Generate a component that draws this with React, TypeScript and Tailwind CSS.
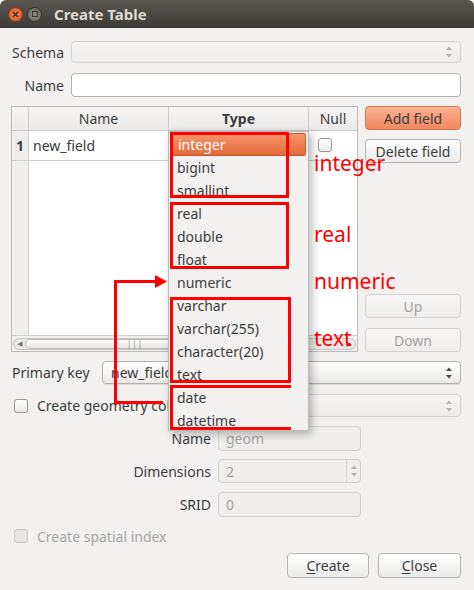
import type { ReactNode } from 'react'
import clsx from 'clsx'

const TYPES = [
  'integer',
  'bigint',
  'smallint',
  'real',
  'double',
  'float',
  'numeric',
  'varchar',
  'varchar(255)',
  'character(20)',
  'text',
  'date',
  'datetime',
]

function SpinArrows({ disabled }: { disabled?: boolean }) {
  const c = disabled ? '#b4b2af' : '#4a4a4a'
  return (
    <svg width="8" height="14" viewBox="0 0 8 14">
      <path d="M1 5 L4 1.5 L7 5 Z" fill={c} />
      <path d="M1 9 L4 12.5 L7 9 Z" fill={c} />
    </svg>
  )
}

function Combo({
  disabled,
  className,
  children,
}: {
  disabled?: boolean
  className?: string
  children?: ReactNode
}) {
  return (
    <div
      className={clsx(
        'flex items-center justify-between rounded-[4px] border pl-[8px] pr-[7px]',
        disabled
          ? 'border-[#d4d3d1] bg-linear-to-b from-[#f6f5f4] to-[#edeceb]'
          : 'border-[#b3b1ae] bg-linear-to-b from-white to-[#ebeae9] shadow-[0_1px_0_rgba(0,0,0,0.08)]',
        className,
      )}
    >
      <span className="truncate">{children}</span>
      <SpinArrows disabled={disabled} />
    </div>
  )
}

function Check({ disabled }: { disabled?: boolean }) {
  return (
    <div
      className={clsx(
        'h-[14px] w-[14px] shrink-0 rounded-[3px] border',
        disabled
          ? 'border-[#c9c8c6] bg-[#e8e7e6]'
          : 'border-[#99968f] bg-linear-to-b from-white to-[#ebeae9]',
      )}
    />
  )
}

function Button({
  className,
  disabled,
  primary,
  children,
}: {
  className?: string
  disabled?: boolean
  primary?: boolean
  children: ReactNode
}) {
  return (
    <div
      className={clsx(
        'flex items-center justify-center rounded-[4px] border',
        primary
          ? 'border-[#d0754f] bg-linear-to-b from-[#fcb092] to-[#f0895f] text-[#3c3c3c]'
          : disabled
            ? 'border-[#d3d2d0] bg-linear-to-b from-[#f7f6f5] to-[#eeedec] text-[#a3a3a3]'
            : 'border-[#b5b3b0] bg-linear-to-b from-white to-[#ecebea] text-[#3c3c3c]',
        className,
      )}
    >
      {children}
    </div>
  )
}

function DisabledInput({ className, children }: { className?: string; children?: ReactNode }) {
  return (
    <div
      className={clsx(
        'flex items-center rounded-[4px] border border-[#d2d1cf] bg-[#efeeed] pl-[7px] text-[#a3a3a3]',
        className,
      )}
    >
      {children}
    </div>
  )
}

function TitleBar() {
  return (
    <div className="flex h-[28px] items-center rounded-t-[6px] bg-linear-to-b from-[#5a5751] to-[#3c3b37] pl-[8px]">
      <div className="flex h-[15px] w-[15px] items-center justify-center rounded-full border border-[#8e3a17] bg-radial from-[#f58a5c] to-[#df4b1a]">
        <svg width="7" height="7" viewBox="0 0 7 7">
          <path d="M1 1 L6 6 M6 1 L1 6" stroke="#3b2219" strokeWidth="1.4" />
        </svg>
      </div>
      <div className="ml-[4px] flex h-[15px] w-[15px] items-center justify-center rounded-full border border-[#34322f] bg-radial from-[#8b8881] to-[#6a6760]">
        <div className="h-[6px] w-[6px] border border-[#3b3a36]" />
      </div>
      <span className="ml-[12px] text-[15px] font-bold text-[#dfdbd2]">Create Table</span>
    </div>
  )
}

function FieldsTable() {
  return (
    <div className="flex h-full w-[347px] flex-col border border-[#bdbbb8] bg-white">
      <div className="flex h-[24px] border-b border-[#c9c8c6] bg-linear-to-b from-[#f6f5f4] to-[#ebeae9]">
        <div className="w-[17px] border-r border-[#cfcecc]" />
        <div className="flex w-[140px] items-center justify-center border-r border-[#cfcecc]">Name</div>
        <div className="flex w-[140px] items-center justify-center border-r border-[#cfcecc] font-bold">
          Type
        </div>
        <div className="flex flex-1 items-center justify-center">Null</div>
      </div>
      <div className="flex flex-1">
        <div className="flex w-[17px] flex-col border-r border-[#cfcecc] bg-[#efeeed]">
          <div className="flex h-[30px] items-center justify-center border-b border-[#cfcecc] font-bold">
            1
          </div>
        </div>
        <div className="w-[140px] border-r border-[#e6e5e4]">
          <div className="flex h-[30px] items-center border-b border-[#cfcecc] pl-[4px]">new_field</div>
        </div>
        <div className="w-[140px] border-r border-[#e6e5e4]">
          <div className="h-[30px] border-b border-[#cfcecc]" />
        </div>
        <div className="flex-1">
          <div className="flex h-[30px] items-start border-b border-[#cfcecc] pl-[9px] pt-[7px]">
            <Check />
          </div>
        </div>
      </div>
      <div className="flex h-[16px] items-center border-t border-[#cfcecc] bg-[#f2f1f0] px-[1px]">
        <div className="flex h-[12px] flex-1 items-center rounded-full border border-[#c6c5c3] bg-[#e9e8e7]">
          <span className="w-[11px] pl-[3px] text-[7px] leading-none text-[#777]">◀</span>
          <div className="flex h-[10px] w-[220px] items-center justify-center rounded-full border border-[#bcbab7] bg-linear-to-b from-white to-[#e7e6e5]">
            <span className="text-[8px] leading-none tracking-[1px] text-[#888]">|||</span>
          </div>
          <div className="flex-1" />
          <span className="pr-[3px] text-[7px] leading-none text-[#555]">▶</span>
        </div>
      </div>
    </div>
  )
}

function TypePopup() {
  return (
    <div className="absolute left-[168px] top-[131px] h-[300px] w-[141px] border border-[#bdbbb8] bg-[#f2f1f0] px-[2px] pt-[1px] shadow-[3px_3px_8px_rgba(0,0,0,0.28)]">
      {TYPES.map((t, i) => (
        <div
          key={t}
          className={clsx(
            'flex h-[23px] items-center pb-[1px] pl-[6px]',
            i === 0 &&
              'rounded-[2px] border border-[#c65a2e] bg-linear-to-b from-[#f5956b] to-[#e4693a] pl-[5px] text-white',
          )}
        >
          {t}
        </div>
      ))}
    </div>
  )
}

function Annotations() {
  return (
    <>
      <div className="absolute left-[170px] top-[132px] h-[66px] w-[119px] border-[3px] border-[#ff0000]" />
      <div className="absolute left-[170px] top-[202px] h-[67px] w-[119px] border-[3px] border-[#ff0000]" />
      <div className="absolute left-[170px] top-[297px] h-[86px] w-[121px] border-[3px] border-[#ff0000]" />
      <div className="absolute left-[170px] top-[385px] h-[45px] w-[121px] border-b-[3px] border-l-[3px] border-t-[3px] border-[#ff0000]" />
      <svg className="absolute left-0 top-0" width="474" height="590" viewBox="0 0 474 590">
        <path d="M115.5 281.5 V402.5 H163" fill="none" stroke="#ff0000" strokeWidth="3" />
        <path d="M114 281.5 H157" fill="none" stroke="#ff0000" strokeWidth="3" />
        <path d="M155 275 L167 281.5 L155 288 Z" fill="#ff0000" />
      </svg>
      <span className="absolute left-[314px] top-[153px] text-[21px] leading-none text-[#ff0000]">integer</span>
      <span className="absolute left-[314px] top-[224px] text-[21px] leading-none text-[#ff0000]">real</span>
      <span className="absolute left-[314px] top-[271px] text-[21px] leading-none text-[#ff0000]">numeric</span>
      <span className="absolute left-[314px] top-[328px] text-[21px] leading-none text-[#ff0000]">text</span>
    </>
  )
}

export default function App() {
  return (
    <div className="relative h-[590px] w-[474px] overflow-hidden bg-[#f2f1f0] font-['Noto_Sans','DejaVu_Sans',sans-serif] text-[14px] text-[#3c3c3c]">
      <TitleBar />
      <div className="flex flex-col pl-[11px] pr-[13px]">
        <div className="mt-[13px] flex h-[22px] items-center">
          <span className="w-[53px] text-right">Schema</span>
          <Combo disabled className="ml-[7px] h-full flex-1" />
        </div>
        <div className="mt-[10px] flex h-[24px] items-center">
          <span className="w-[53px] text-right">Name</span>
          <div className="ml-[7px] h-full flex-1 rounded-[4px] border border-[#b3b1ae] bg-white" />
        </div>
        <div className="mt-[9px] flex h-[246px]">
          <FieldsTable />
          <div className="ml-[7px] flex w-[96px] flex-col">
            <Button primary className="h-[24px]">
              Add field
            </Button>
            <Button className="mt-[9px] h-[24px]">Delete field</Button>
            <div className="flex-1" />
            <Button disabled className="h-[24px]">
              Up
            </Button>
            <Button disabled className="mt-[10px] h-[24px]">
              Down
            </Button>
          </div>
        </div>
        <div className="mt-[9px] flex h-[23px] items-center">
          <span className="w-[84px] pl-[1px]">Primary key</span>
          <Combo className="ml-[7px] h-full flex-1">new_field</Combo>
        </div>
        <div className="mt-[10px] flex h-[23px] items-center">
          <div className="ml-[3px]">
            <Check />
          </div>
          <span className="ml-[9px]">Create geometry column</span>
          <Combo disabled className="ml-[12px] h-full flex-1" />
        </div>
        <div className="mt-[9px] flex h-[25px] items-center">
          <span className="w-[200px] text-right">Name</span>
          <DisabledInput className="ml-[7px] h-full w-[143px]">geom</DisabledInput>
        </div>
        <div className="mt-[8px] flex h-[24px] items-center">
          <span className="w-[200px] text-right">Dimensions</span>
          <div className="ml-[7px] flex h-full w-[143px] rounded-[4px] border border-[#d2d1cf] bg-[#efeeed] text-[#a3a3a3]">
            <span className="flex flex-1 items-center pl-[7px]">2</span>
            <div className="flex w-[14px] items-center justify-center border-l border-[#d2d1cf]">
              <SpinArrows disabled />
            </div>
          </div>
        </div>
        <div className="mt-[9px] flex h-[25px] items-center">
          <span className="w-[200px] text-right">SRID</span>
          <DisabledInput className="ml-[7px] h-full w-[143px]">0</DisabledInput>
        </div>
        <div className="mt-[8px] flex h-[22px] items-center">
          <div className="ml-[3px]">
            <Check disabled />
          </div>
          <span className="ml-[9px] text-[#a5a5a5]">Create spatial index</span>
        </div>
        <div className="mt-[6px] flex h-[25px] justify-end">
          <Button className="w-[82px]">
            <span className="underline underline-offset-2">C</span>reate
          </Button>
          <Button className="ml-[9px] w-[83px]">
            <span className="underline underline-offset-2">C</span>lose
          </Button>
        </div>
      </div>
      <TypePopup />
      <Annotations />
    </div>
  )
}
